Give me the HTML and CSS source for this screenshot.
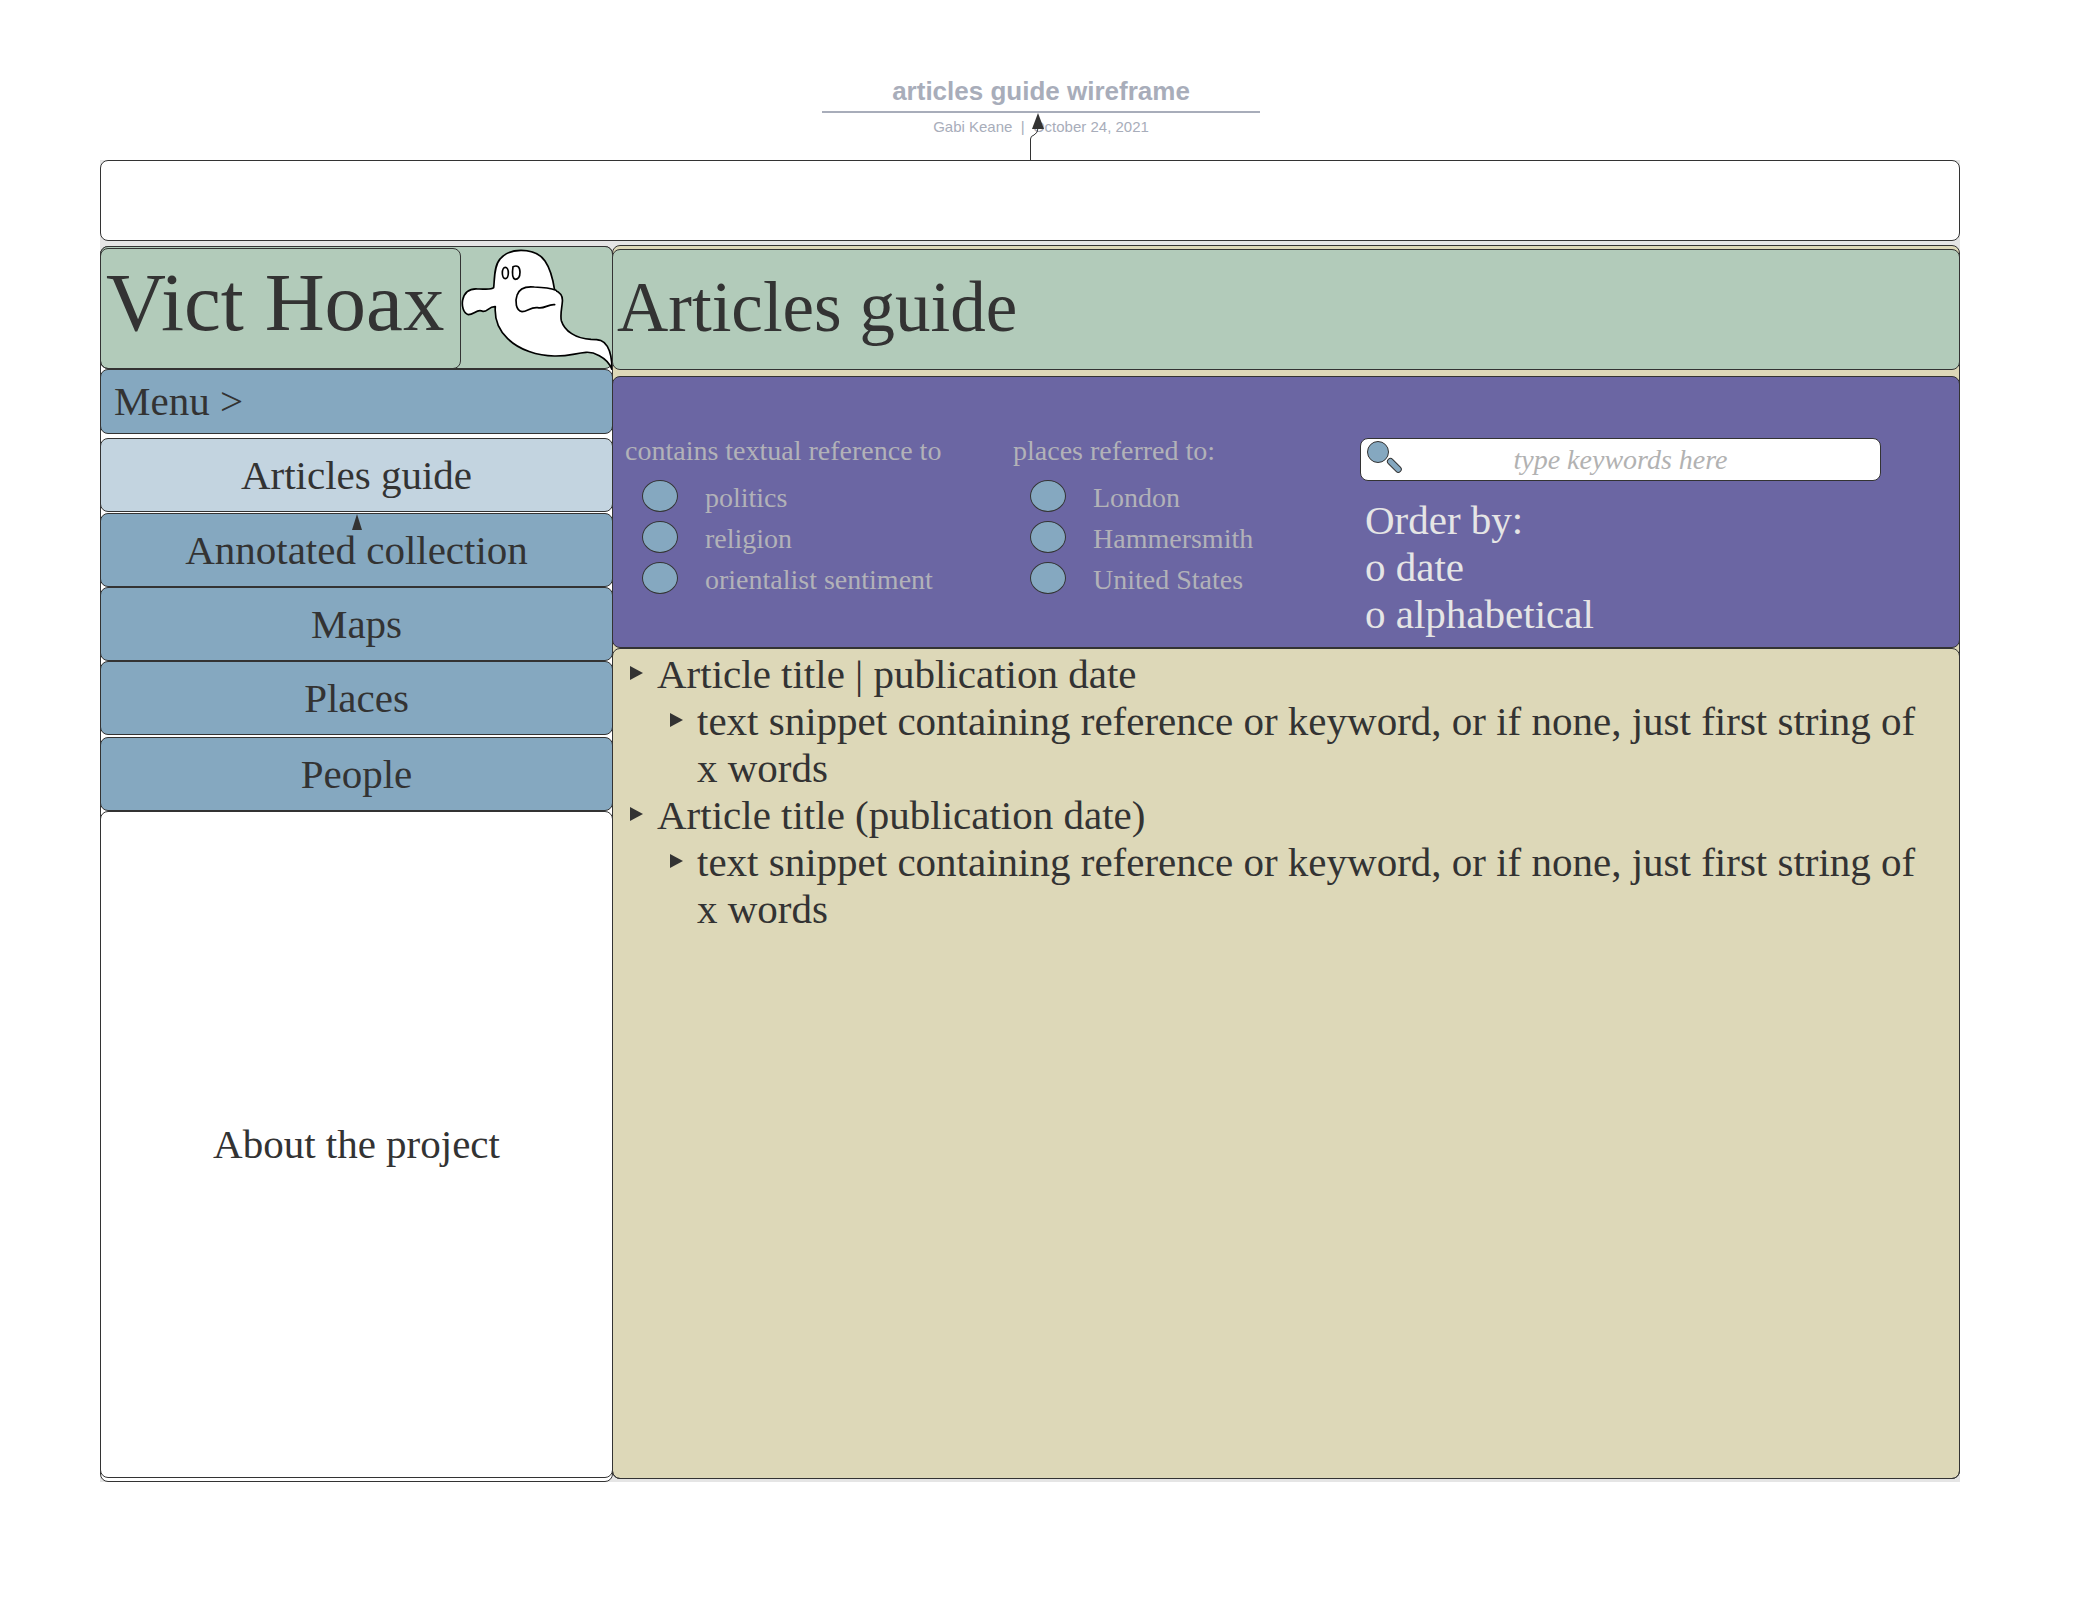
FILE: index.html
```html
<!DOCTYPE html>
<html lang="en">
<head>
<meta charset="utf-8">
<title>articles guide wireframe</title>
<link rel="stylesheet" href="styles.css">
</head>
<body>
<div class="page">
  <header class="doc-header">
    <h1 class="doc-title">articles guide wireframe</h1>
    <p class="doc-meta">Gabi Keane &nbsp;|&nbsp; October 24, 2021</p>
    <svg class="connector" width="20" height="48" viewBox="0 0 20 48" aria-hidden="true">
      <path d="M4.500 48V27Q4.500 24 8 23Q12 21 12 16" fill="none" stroke="#333"/>
      <path d="M12 1L18 17H6Z" fill="#333"/>
    </svg>
  </header>

  <div class="canvas">
    <div class="box banner"></div>
    <div class="columns">
      <aside class="sidebar">
        <div class="box brand">
          <div class="box brand-name">Vict Hoax</div>
          <svg class="ghost" viewBox="60 36 456 366" role="img" aria-label="Ghost">
            <path class="ink" d="M158 155C161 132 158 90 178 68C195 48 215 43 240 43C268 43 295 50 312 75C328 98 336 130 341 163C360 170 366 182 364 198C363 215 357 235 361 254C366 270 378 284 392 293C412 306 425 309 450 310C474 310 488 313 499 331C510 350 513 370 513 400C506 382 492 368 475 359C462 352 450 348 435 349C400 352 385 361 340 360C290 360 235 342 200 308C170 280 160 250 163 212C143 211 140 228 125 226C108 217 100 236 82 236C66 232 62 208 65 192C70 170 82 157 110 159C125 158 150 163 158 155Z"/>
            <path class="ink" d="M341 206C320 204 310 220 290 215C270 212 260 226 243 227C224 224 222 195 228 178C235 155 260 151 280 153C310 154 330 157 345 163"/>
            <ellipse class="ink eye" cx="193" cy="111" rx="9" ry="17"/>
            <path class="ink eye" d="M216 92Q236 84 237 108Q237 130 222 130Q211 126 216 92Z"/>
          </svg>
        </div>
        <button class="box menu" type="button">Menu &gt;</button>
        <nav class="nav">
          <a class="box current" href="#guide">Articles guide</a>
          <a class="box" href="#collection">Annotated collection
            <svg class="pointer" width="12" height="16" viewBox="0 0 12 16" aria-hidden="true"><path d="M6 0L11 16H1Z" fill="#333"/></svg>
          </a>
          <a class="box" href="#maps">Maps</a>
          <a class="box" href="#places">Places</a>
          <a class="box people" href="#people">People</a>
        </nav>
        <a class="box about" href="#about">About the project</a>
      </aside>

      <main class="box main">
        <h2 class="box main-title">Articles guide</h2>
        <form class="box filters">
          <fieldset class="group">
            <legend>contains textual reference to</legend>
            <label><input type="checkbox"><span>politics</span></label>
            <label><input type="checkbox"><span>religion</span></label>
            <label><input type="checkbox"><span>orientalist sentiment</span></label>
          </fieldset>
          <fieldset class="group">
            <legend>places referred to:</legend>
            <label><input type="checkbox"><span>London</span></label>
            <label><input type="checkbox"><span>Hammersmith</span></label>
            <label><input type="checkbox"><span>United States</span></label>
          </fieldset>
          <div class="lookup">
            <div class="search">
              <input class="box" type="text" placeholder="type keywords here" aria-label="Keywords">
              <svg class="lens" width="36" height="34" viewBox="0 0 36 34" aria-hidden="true">
                <g fill="#85a8c0" stroke="#333">
                  <circle cx="11" cy="12" r="10.500"/>
                  <rect x="19" y="22" width="17" height="6" rx="3" transform="rotate(45 27 25)"/>
                </g>
              </svg>
            </div>
            <div class="order">
              <span>Order by:</span>
              <button type="button">o date</button>
              <button type="button">o alphabetical</button>
            </div>
          </div>
        </form>
        <section class="box results">
          <ul>
            <li>Article title | publication date
              <ul><li>text snippet containing reference or keyword, or if none, just first string of x words</li></ul>
            </li>
            <li>Article title (publication date)
              <ul><li>text snippet containing reference or keyword, or if none, just first string of x words</li></ul>
            </li>
          </ul>
        </section>
      </main>
    </div>
  </div>
</div>
</body>
</html>
```
FILE: styles.css
```css
* { box-sizing: border-box; }

body {
  margin: 0;
  background: #fff;
  color: #333;
  font: 41px/47px "Gentium Book Basic", "Liberation Serif", serif;
}

.page {
  display: flex;
  flex-direction: column;
  min-height: 100vh;
  padding-bottom: 118px;
}

.box {
  border: 1px solid #333;
  border-radius: 8px;
}

/* Document header */
.doc-header {
  position: relative;
  height: 160px;
  padding-top: 74px;
  padding-right: 2px;
  color: #a8adba;
  font-family: "Liberation Sans", Arial, sans-serif;
  text-align: center;
}
.doc-title {
  width: 438px;
  height: 39px;
  margin: 0 auto;
  border-bottom: 2px solid #a8adba;
  font-size: 26px;
  line-height: 34px;
}
.doc-meta {
  margin: 4px 0 0;
  font-size: 15px;
  line-height: 20px;
}
.connector {
  position: absolute;
  bottom: 0;
  left: calc(50% - 16px);
}

/* Canvas */
.canvas {
  display: flex;
  flex: 1;
  flex-direction: column;
  gap: 4px;
  margin: 0 124px 0 100px;
  background: #e5e5e5;
}
.banner {
  height: 81px;
  background: #fff;
}
.columns {
  display: grid;
  flex: 1;
  grid-template-columns: 128fr 337fr;
}

/* Sidebar */
.sidebar {
  display: flex;
  flex-direction: column;
  margin-top: 1px;
  padding-bottom: 3px;
  border: 1px solid #333;
  border-radius: 8px;
  background: #fff;
}
.sidebar > *, .nav > * { margin-right: -1px; margin-left: -1px; }
.brand {
  display: flex;
  justify-content: space-between;
  height: 123px;
  margin-top: -1px;
  padding-top: 1px;
  background: #b2cbba;
}
.brand-name {
  display: flex;
  align-items: center;
  width: 361px;
  margin: 0 0 -1px -1px;
  padding: 0 0 14px 5px;
  font-size: 83px;
  line-height: 94px;
  white-space: nowrap;
}
.ghost {
  width: 152px;
  height: 122px;
  margin-right: -1px;
}
.ink {
  fill: #fff;
  stroke: #000;
  stroke-width: 5;
  stroke-linecap: round;
  stroke-linejoin: round;
}
.menu {
  height: 65px;
  padding: 0 13px;
  background: #85a8c0;
  color: #333;
  font: inherit;
  text-align: left;
}
.nav {
  display: flex;
  flex-direction: column;
  margin: 4px 0 0;
}
.nav a, .about {
  position: relative;
  display: flex;
  align-items: center;
  justify-content: center;
  height: 74px;
  background: #85a8c0;
  color: #333;
  text-decoration: none;
}
.nav .current {
  margin-bottom: 1px;
  background: #c3d4e0;
}
.nav .people { margin-top: 2px; }
.pointer {
  position: absolute;
  top: 0;
  left: calc(50% - 6px);
}
.nav + .about {
  flex: 1;
  background: #fff;
}

/* Main */
.main {
  display: flex;
  flex-direction: column;
  margin-bottom: 3px;
  margin-left: -1px;
  padding-top: 3px;
  background: #ddd8b8;
}
.main > * { margin-right: -1px; margin-left: -1px; }
.main-title {
  display: flex;
  align-items: center;
  height: 121px;
  margin-top: 0;
  margin-bottom: 6px;
  padding: 0 4px 6px;
  background: #b2cbba;
  font-size: 71px;
  font-weight: normal;
  line-height: 82px;
}
.filters {
  display: grid;
  grid-template-columns: 388px 347px minmax(0, 521px);
  padding: 56px 12px 9px;
  background: #6b66a3;
  color: #b2b2b8;
  font-size: 28px;
  line-height: 36px;
}
.group {
  min-width: 0;
  margin: 0;
  padding: 0;
  border: 0;
}
.group legend {
  margin-bottom: 6px;
  padding: 0;
  white-space: nowrap;
}
.group label {
  display: flex;
  align-items: center;
  gap: 27px;
  height: 41px;
  padding-left: 17px;
}
.group label span { padding-top: 4px; }
.group input {
  appearance: none;
  width: 36px;
  height: 32px;
  margin: 0;
  border: 1px solid #333;
  border-radius: 50%;
  background: #85a8c0;
}
.search { position: relative; margin-top: 5px; }
.search input {
  display: block;
  width: 100%;
  height: 43px;
  padding: 0;
  background: #fff;
  font: italic 28px/36px "Gentium Book Basic", "Liberation Serif", serif;
  text-align: center;
}
.search input::placeholder { color: #b2b2b2; opacity: 1; }
.lens {
  position: absolute;
  top: 2px;
  left: 7px;
}
.order {
  display: flex;
  flex-direction: column;
  align-items: flex-start;
  margin-top: 16px;
  padding-left: 5px;
  color: #e5e5e5;
  font-size: 41px;
  line-height: 47px;
}
.order button {
  padding: 0;
  border: 0;
  background: none;
  color: inherit;
  font: inherit;
}
.results {
  flex: 1;
  margin-bottom: -1px;
  padding: 2px 28px 0 14px;
}
.results ul {
  margin: 0;
  padding: 0;
  list-style: none;
}
.results ul ul { padding-left: 10px; }
.results li {
  position: relative;
  padding-left: 30px;
}
.results li::before {
  position: absolute;
  top: 15px;
  left: 3px;
  border: solid transparent;
  border-width: 7px 0 7px 13px;
  border-left-color: #333;
  content: "";
}
```
